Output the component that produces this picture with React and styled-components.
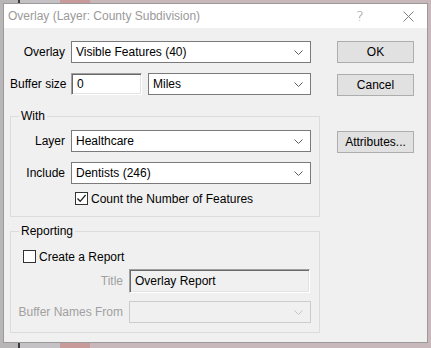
import React from 'react';
import styled, { createGlobalStyle } from 'styled-components';

const Global = createGlobalStyle`
  html, body {
    margin: 0;
    padding: 0;
  }
  body {
    width: 431px;
    height: 348px;
    overflow: hidden;
    background:
      linear-gradient(90deg, #b9b6b8 0 18px, #3c3c3c 18px 20px, #c4c2c4 20px 60px, #c99a9a 60px 90px, #c8b8bc 90px 100%);
    font-family: "Liberation Sans", Arial, sans-serif;
    font-size: 12px;
    color: #000;
  }
`;

function Chevron({ faded }) {
  return (
    <svg width="9" height="5" viewBox="0 0 9 5">
      <path d="M0.5 0.5 L4.5 4.5 L8.5 0.5" fill="none" stroke={faded ? '#c4c4c4' : '#606060'} strokeWidth="1" />
    </svg>
  );
}

function Check() {
  return (
    <svg width="11" height="11" viewBox="0 0 11 11">
      <path d="M1.5 5.5 L4.2 8.3 L9.6 2" fill="none" stroke="#222" strokeWidth="1.3" />
    </svg>
  );
}

function App() {
  return (
    <>
      <Global />
      <Dialog>
        <TitleBar>
          <Title>Overlay (Layer: County Subdivision)</Title>
          <Help>?</Help>
          <Close>
            <svg width="11" height="11" viewBox="0 0 11 11">
              <path d="M0.5 0.5 L10.5 10.5 M10.5 0.5 L0.5 10.5" stroke="#808080" strokeWidth="1" />
            </svg>
          </Close>
        </TitleBar>

        <Body>
          <Main>
            <Row labelWidth={55}>
              <Label>Overlay</Label>
              <Select width={240}>
                <span>Visible Features (40)</span>
                <Chevron />
              </Select>
            </Row>
            <Row labelWidth={55} style={{ marginTop: 10 }}>
              <Label>Buffer size</Label>
              <Inline>
                <TextBox width={71} white>0</TextBox>
                <Select width={163}>
                  <span>Miles</span>
                  <Chevron />
                </Select>
              </Inline>
            </Row>

            <Group top={13}>
              <Legend>With</Legend>
              <Row labelWidth={54}>
                <Label>Layer</Label>
                <Select width={240}>
                  <span>Healthcare</span>
                  <Chevron />
                </Select>
              </Row>
              <Row labelWidth={54} style={{ marginTop: 10 }}>
                <Label>Include</Label>
                <Select width={240}>
                  <span>Dentists (246)</span>
                  <Chevron />
                </Select>
              </Row>
              <CheckRow indent={64} style={{ marginTop: 8 }}>
                <Box><Check /></Box>
                <span>Count the Number of Features</span>
              </CheckRow>
            </Group>

            <Group top={6} bottomPad={9}>
              <Legend>Reporting</Legend>
              <CheckRow indent={12} style={{ marginTop: 5 }}>
                <Box />
                <span>Create a Report</span>
              </CheckRow>
              <Row labelWidth={112} style={{ marginTop: 6 }}>
                <Label disabled>Title</Label>
                <TextBox width={181} tall>Overlay Report</TextBox>
              </Row>
              <Row labelWidth={112} style={{ marginTop: 8 }}>
                <Label disabled>Buffer Names From</Label>
                <Select width={182} disabled>
                  <span />
                  <Chevron faded />
                </Select>
              </Row>
            </Group>
          </Main>

          <Side>
            <Button>OK</Button>
            <Button style={{ marginTop: 11 }}>Cancel</Button>
            <Button style={{ marginTop: 35 }}>Attributes...</Button>
          </Side>
        </Body>
      </Dialog>
    </>
  );
}

const Dialog = styled.div`
  margin: 3px 0 0 3px;
  width: 425px;
  height: 340px;
  box-sizing: border-box;
  border: 1px solid #9a9a9a;
  background: #f0f0f0;
  display: flex;
  flex-direction: column;
`;

const TitleBar = styled.div`
  height: 24px;
  background: #fff;
  display: flex;
  align-items: center;
  padding-left: 4px;
  flex-shrink: 0;
`;

const Title = styled.div`
  color: #9a9a9a;
  font-size: 12px;
  flex: 1;
`;

const Help = styled.div`
  color: #8a8a8a;
  font-family: "DejaVu Sans", sans-serif;
  font-size: 14px;
  font-weight: 300;
  width: 14px;
  text-align: center;
  margin-right: 36px;
`;

const Close = styled.div`
  display: flex;
  margin-right: 13px;
`;

const Body = styled.div`
  display: flex;
  padding-top: 13px;
`;

const Main = styled.div`
  width: 316px;
  padding-left: 6px;
  box-sizing: border-box;
  display: flex;
  flex-direction: column;
`;

const Row = styled.div`
  display: grid;
  grid-template-columns: ${({ labelWidth }) => labelWidth}px auto;
  column-gap: 6px;
  align-items: center;
`;

const Label = styled.div`
  text-align: right;
  white-space: nowrap;
  color: ${({ disabled }) => (disabled ? '#a0a0a0' : '#000')};
`;

const Inline = styled.div`
  display: flex;
  gap: 6px;
`;

const Select = styled.div`
  width: ${({ width }) => width}px;
  height: 22px;
  box-sizing: border-box;
  border: 1px solid ${({ disabled }) => (disabled ? '#cccccc' : '#7a7a7a')};
  background: ${({ disabled }) => (disabled ? '#f0f0f0' : '#fff')};
  display: flex;
  align-items: center;
  justify-content: space-between;
  padding: 0 7px 0 4px;
  white-space: nowrap;
`;

const TextBox = styled.div`
  width: ${({ width }) => width}px;
  height: ${({ tall }) => (tall ? 24 : 22)}px;
  box-sizing: border-box;
  border: 1px solid;
  border-color: #a0a0a0 #ffffff #ffffff #a0a0a0;
  box-shadow: inset 1px 1px 0 #696969, inset -1px -1px 0 #e3e3e3;
  background: ${({ white }) => (white ? '#fff' : '#f0f0f0')};
  display: flex;
  align-items: center;
  padding-left: 5px;
`;

const Group = styled.fieldset`
  margin: ${({ top }) => top}px 0 0 0;
  width: 310px;
  box-sizing: border-box;
  border: 1px solid #dcdcdc;
  padding: 6px 0 ${({ bottomPad }) => bottomPad || 11}px 0;
  min-width: 0;
`;

const Legend = styled.legend`
  margin-left: 8px;
  padding: 0 2px;
  line-height: 16px;
`;

const CheckRow = styled.label`
  display: flex;
  align-items: center;
  gap: 3px;
  padding-left: ${({ indent }) => indent}px;
  height: 13px;
`;

const Box = styled.span`
  width: 13px;
  height: 13px;
  box-sizing: border-box;
  border: 1px solid #333;
  background: #fff;
  display: flex;
  align-items: center;
  justify-content: center;
`;

const Side = styled.div`
  display: flex;
  flex-direction: column;
  margin-left: 17px;
`;

const Button = styled.button`
  width: 77px;
  height: 22px;
  box-sizing: border-box;
  border: 1px solid #adadad;
  background: #e1e1e1;
  font-family: "Liberation Sans", Arial, sans-serif;
  font-size: 12px;
  color: #000;
  padding: 0;
`;

export default App;
